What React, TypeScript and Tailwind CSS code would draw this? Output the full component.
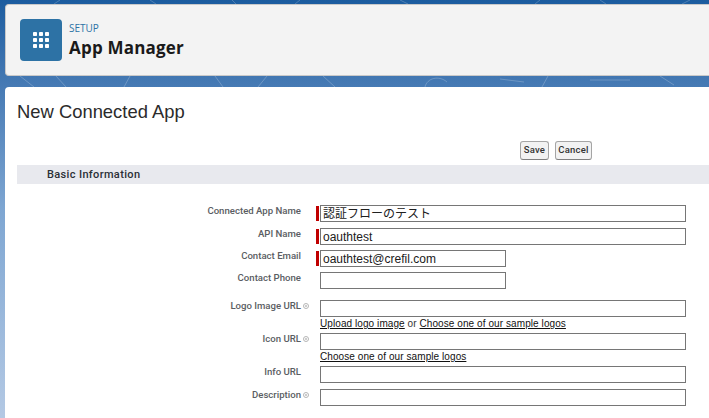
const labelFont = "font-['Liberation_Sans','Noto_Sans_CJK_JP',Arial,sans-serif]"

function HelpDot() {
  return (
    <span className="ml-[2px] flex h-[6px] w-[6px] items-center justify-center rounded-full border border-[#b5b5b5] bg-white">
      <span className="h-[2px] w-[2px] rounded-full bg-[#bdbdbd]" />
    </span>
  )
}

function Row({
  label,
  value,
  help,
  required,
  short,
  mt,
  children,
}: {
  label: string
  value?: string
  help?: boolean
  required?: boolean
  short?: boolean
  mt: string
  children?: React.ReactNode
}) {
  return (
    <div className={`flex ${mt}`}>
      <div className="-mt-[1px] flex h-[14px] w-[316px] shrink-0 items-center pr-[7px] font-['Roboto',sans-serif] text-[9.6px] font-medium leading-none text-[#5a5d62]">
        <span className="w-[301px] shrink-0 text-right">{label}</span>
        {help ? <HelpDot /> : null}
      </div>
      <div className="flex w-[370px] shrink-0 flex-col">
        <div className="flex items-start">
          <span className={`mt-[1px] h-[15px] w-[3px] shrink-0 ${required ? 'bg-[#c00000]' : ''}`} />
          <div
            className={`ml-[1px] flex h-[17px] items-center border border-[#767676] bg-white px-[2px] text-[12px] leading-none text-[#202020] ${short ? 'w-[186px]' : 'w-[366px]'}`}
          >
            {value}
          </div>
        </div>
        {children}
      </div>
    </div>
  )
}

export default function App() {
  return (
    <div className={`relative h-[418px] w-[709px] overflow-hidden bg-gradient-to-b from-[#1b5c9f] via-[#7ea6d2] to-[#b4c9e4] ${labelFont}`}>
      <svg className="absolute left-0 top-0" width="709" height="90" fill="none" stroke="#ffffff" strokeOpacity="0.22" strokeWidth="1">
        <path d="M20 76l14 11M56 76l10 11M130 76l-6 11M215 76l8 11M258 87l9-11M335 87l-12-11M425 87c2-9 14-12 22-5M500 79l24 3M548 76l-6 11M590 80h40M660 76l14 9" />
        <path d="M60 0l-6 4M150 0l6 4M232 0l4 4M300 0l-5 4M400 0l8 4M540 0l-5 4M600 0l6 4M690 0l-8 4" />
      </svg>
      <div className="relative pl-[5px] pt-[4px]">
        <header className="flex h-[72px] items-center rounded-l-[4px] border border-r-0 border-[#c9c9c9] bg-[#f3f3f3] pl-[14px]">
          <div className="flex h-[42px] w-[42px] items-center justify-center rounded-[4px] bg-[#2d72a5]">
            <svg width="18" height="18" viewBox="0 0 18 18" fill="#fff">
              <rect x="1" y="1" width="4" height="4" rx="0.8" />
              <rect x="7" y="1" width="4" height="4" rx="0.8" />
              <rect x="13" y="1" width="4" height="4" rx="0.8" />
              <rect x="1" y="7" width="4" height="4" rx="0.8" />
              <rect x="7" y="7" width="4" height="4" rx="0.8" />
              <rect x="13" y="7" width="4" height="4" rx="0.8" />
              <rect x="1" y="13" width="4" height="4" rx="0.8" />
              <rect x="7" y="13" width="4" height="4" rx="0.8" />
              <rect x="13" y="13" width="4" height="4" rx="0.8" />
            </svg>
          </div>
          <div className="ml-[7px] font-['Open_Sans',sans-serif]">
            <div className="text-[10px] leading-[14px] text-[#2d72a5]">SETUP</div>
            <div className="mt-[2px] text-[17px] font-bold leading-[22px] tracking-[0.2px] text-[#1a1a1a]">App Manager</div>
          </div>
        </header>

        <main className="mt-[11px] h-[340px] rounded-tl-[4px] bg-white pl-[12px]">
          <h1 className="pt-[13px] font-['Liberation_Sans',sans-serif] text-[18.4px] leading-[24px] text-[#2b2b2b]">New Connected App</h1>

          <div className="mt-[17px] flex gap-[6px] pl-[503px]">
            <button className="h-[19px] w-[29px] rounded-[3px] border border-[#a5a5a5] border-b-[#7f7f7f] bg-[#f2f2f2] pb-[1px] font-['Roboto',sans-serif] text-[9.5px] font-medium leading-none tracking-[0.2px] text-[#333]">Save</button>
            <button className="h-[19px] w-[37px] rounded-[3px] border border-[#a5a5a5] border-b-[#7f7f7f] bg-[#f2f2f2] pb-[1px] font-['Roboto',sans-serif] text-[9.5px] font-medium leading-none tracking-[0.2px] text-[#333]">Cancel</button>
          </div>

          <div className="mt-[5px] flex h-[19px] items-center bg-[#e8e9ee] pl-[30px] font-['Roboto',sans-serif] text-[11px] font-medium leading-none tracking-[0.35px] text-[#2b2f36]">
            Basic Information
          </div>

          <div className="-ml-[17px]">
            <Row label="Connected App Name" value="認証フローのテスト" required mt="mt-[21px]" />
            <Row label="API Name" value="oauthtest" required mt="mt-[6px]" />
            <Row label="Contact Email" value="oauthtest@crefil.com" required short mt="mt-[5px]" />
            <Row label="Contact Phone" short mt="mt-[5px]" />
            <Row label="Logo Image URL" help mt="mt-[11px]">
              <div className="ml-[4px] h-[16px] text-[10px] leading-[14px] tracking-[0.08px] text-[#333]">
                <a className="text-[#111] underline">Upload logo image</a> or <a className="text-[#111] underline">Choose one of our sample logos</a>
              </div>
            </Row>
            <Row label="Icon URL" help mt="mt-[0px]">
              <div className="ml-[4px] h-[16px] text-[10px] leading-[14px] tracking-[0.08px]">
                <a className="text-[#111] underline">Choose one of our sample logos</a>
              </div>
            </Row>
            <Row label="Info URL" mt="mt-[0px]" />
            <Row label="Description" help mt="mt-[6px]" />
          </div>
        </main>
      </div>
    </div>
  )
}
